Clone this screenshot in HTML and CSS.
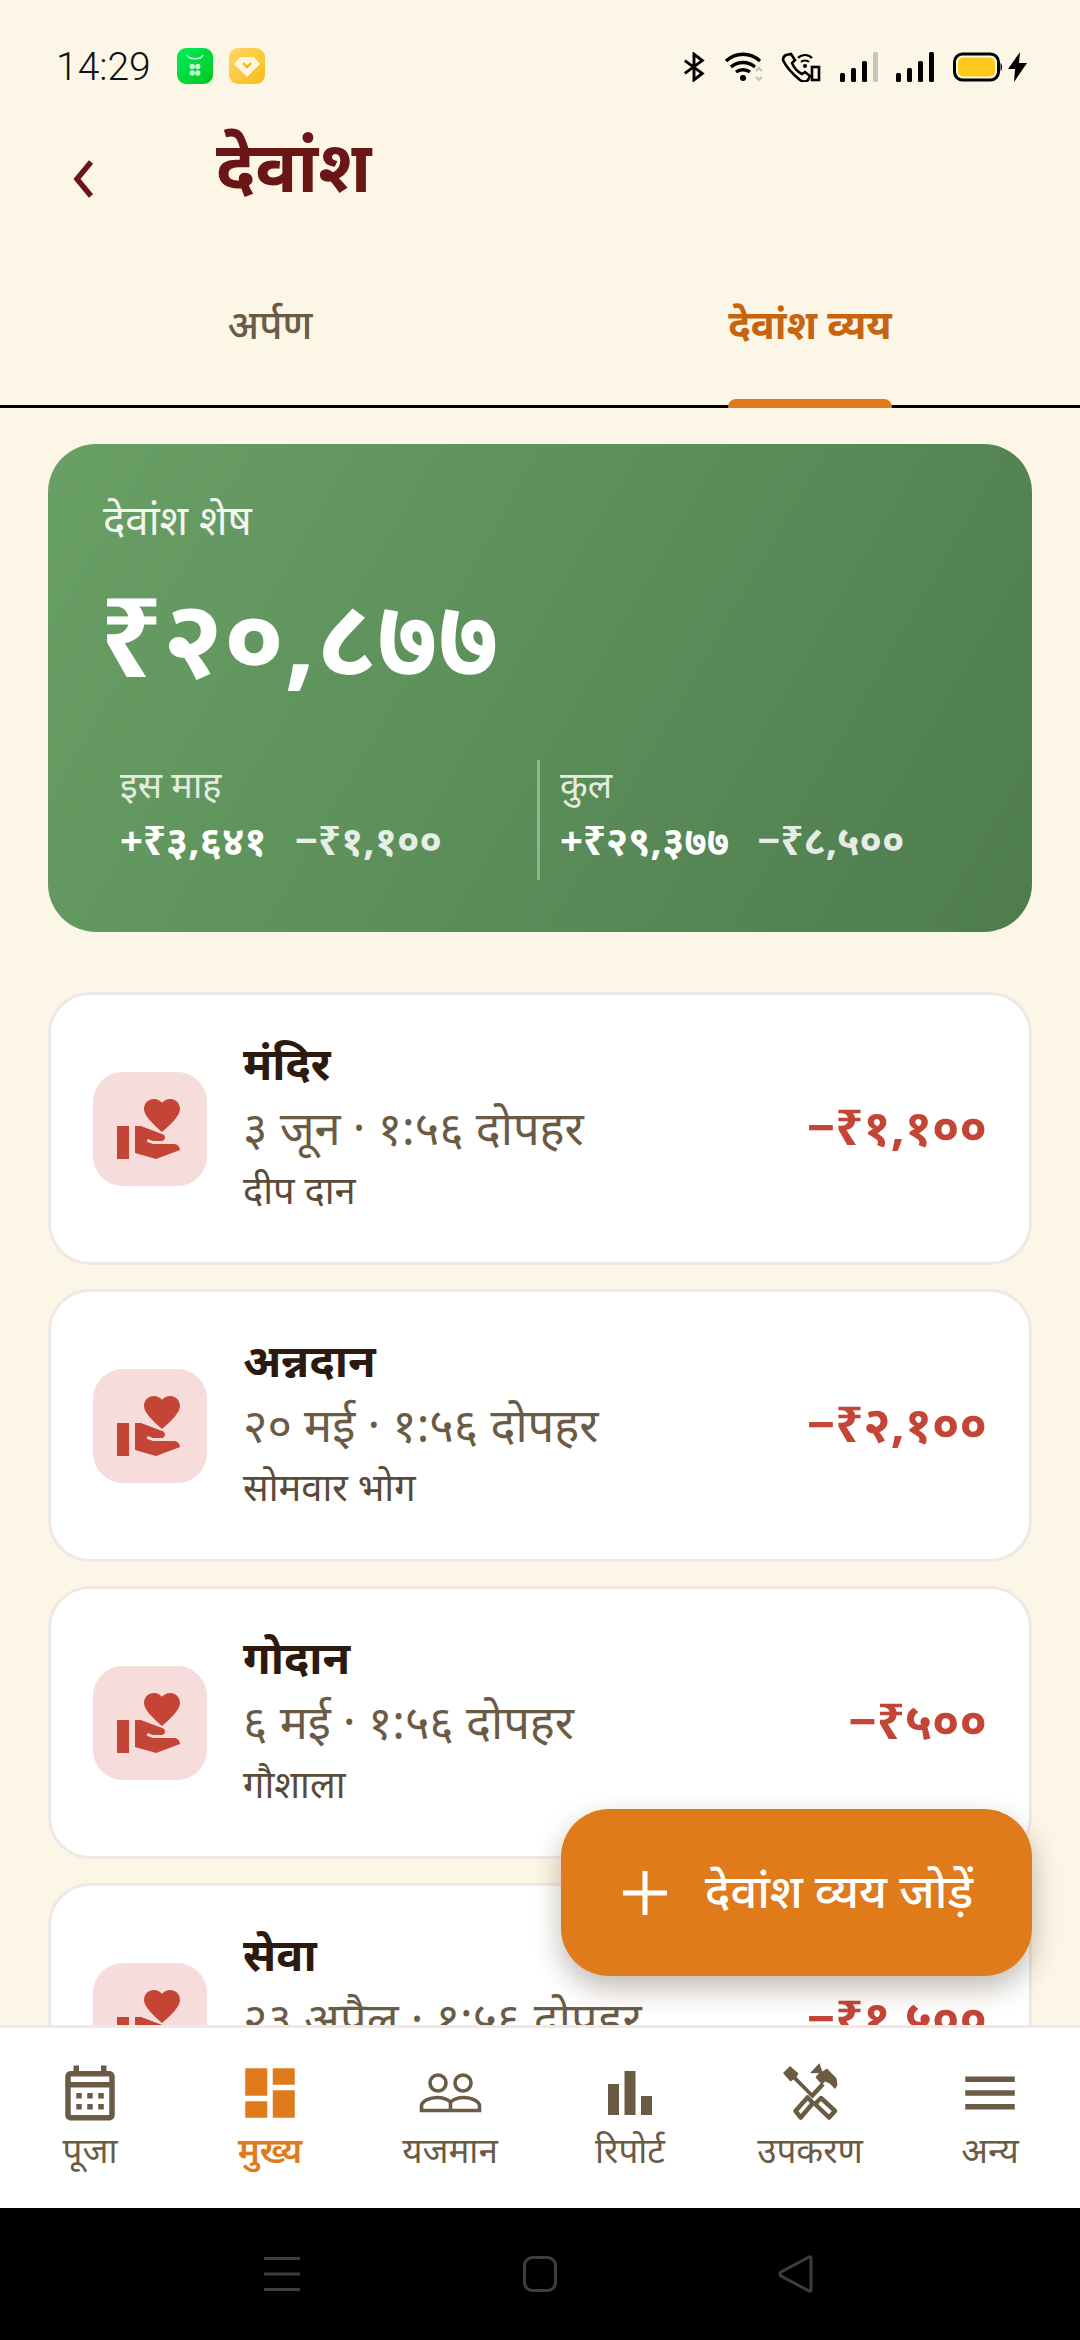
FILE: index.html
```html
<!DOCTYPE html>
<html lang="hi">
<head>
<meta charset="utf-8">
<title>देवांश</title>
<link rel="stylesheet" href="styles.css">
</head>
<body>
<div class="app">
  <div class="status">
    <span class="time">14:29</span>
    <svg class="notif notif-first" viewBox="0 0 36 36"><defs><linearGradient id="gg" x1="0" y1="0" x2="1" y2="1"><stop offset="0" stop-color="#00ee5c"/><stop offset="1" stop-color="#00c71f"/></linearGradient></defs><rect width="36" height="36" rx="9" fill="url(#gg)"/><path d="M10 7c2 5 14 5 16 0" fill="none" stroke="#d6ffe2" stroke-width="1.6"/><g fill="#c6f7d5"><ellipse cx="15.2" cy="18.5" rx="2.6" ry="2.8"/><ellipse cx="20.8" cy="18.5" rx="2.6" ry="2.8"/><ellipse cx="15.2" cy="25" rx="2.6" ry="2.8"/><ellipse cx="20.8" cy="25" rx="2.6" ry="2.8"/></g></svg>
    <svg class="notif" viewBox="0 0 36 36"><defs><linearGradient id="yg" x1="0" y1="0" x2="1" y2="1"><stop offset="0" stop-color="#ffd666"/><stop offset="1" stop-color="#f6bd1a"/></linearGradient></defs><rect width="36" height="36" rx="9" fill="url(#yg)"/><path d="M11 9h14l6 7-13 13L5 16z" fill="#fff6dc"/><path d="M14 15l4 4 4-4" fill="none" stroke="#f3b71c" stroke-width="2.4"/></svg>
    <div class="status-right">
      <svg class="s-bt" viewBox="0 0 24 30"><path d="M2 8l19 14-9 7V1l9 7L2 22" fill="none" stroke="#000" stroke-width="3.2"/></svg>
      <svg class="s-wifi" viewBox="0 0 40 30"><path d="M1 9c10-9 24-9 34 0M6 15c7-6 17-6 24 0M11 20c4-3 10-3 14 0" fill="none" stroke="#000" stroke-width="3.4"/><circle cx="18" cy="26" r="3" fill="#000"/><path d="M31 19l3-3 3 3M31 25l3 3 3-3" fill="none" stroke="#c9c3b8" stroke-width="2.2"/></svg>
      <svg class="s-call" viewBox="0 0 40 30"><path d="M5 3l5-1 4 6-3 3c2 5 6 9 10 11l3-2 5 4-2 4c-2 2-5 2-8 0C13 23 5 15 2 8c0-2 1-4 3-5z" fill="none" stroke="#000" stroke-width="2.6"/><path d="M17 6c4-4 10-4 14 0M20 10c2-2 6-2 8 0" fill="none" stroke="#000" stroke-width="2.2"/><circle cx="24" cy="14" r="2" fill="#000"/><rect x="31" y="15" width="7" height="13" fill="none" stroke="#000" stroke-width="2.6"/></svg>
      <svg class="s-sig" viewBox="0 0 40 30"><rect x="1" y="21" width="5" height="9" rx="1.5"/><rect x="12" y="16" width="5" height="14" rx="1.5"/><rect x="23" y="9" width="5" height="21" rx="1.5"/><rect x="34" y="0" width="5" height="30" rx="1.5" fill="#c9c3b8"/></svg>
      <svg class="s-sig s-sig2" viewBox="0 0 40 30"><rect x="1" y="21" width="5" height="9" rx="1.5"/><rect x="12" y="16" width="5" height="14" rx="1.5"/><rect x="23" y="9" width="5" height="21" rx="1.5"/><rect x="34" y="0" width="5" height="30" rx="1.5"/></svg>
      <svg class="s-bat" viewBox="0 0 50 30"><rect x="1.5" y="2" width="44" height="26" rx="8" fill="none" stroke="#000" stroke-width="3"/><rect x="5" y="5.5" width="37" height="19" rx="5" fill="#fdc91c"/><path d="M47.500 11c2 1 2 7 0 8z" fill="#000"/></svg>
      <svg class="s-bolt" viewBox="0 0 21 30"><path d="M13 0L1 17h7l-1 13L20 11h-8z" fill="#000"/></svg>
    </div>
  </div>

  <div class="header">
    <svg class="back" viewBox="0 0 24 40"><path d="M20 3L6 20l14 17" fill="none" stroke="#6b1616" stroke-width="5.500"/></svg>
    <h1 class="title">देवांश</h1>
  </div>

  <div class="tabs">
    <div class="tab"><span class="tab-label">अर्पण</span></div>
    <div class="tab tab-active"><span class="tab-label">देवांश व्यय<i class="tab-ind"></i></span></div>
  </div>

  <div class="scroll">
    <section class="hero">
      <div class="hero-label">देवांश शेष</div>
      <div class="hero-amount">₹२०,८७७</div>
      <div class="stats">
        <div class="stat stat-first">
          <div class="stat-label">इस माह</div>
          <div class="stat-value"><span>+₹३,६४१</span><span class="dim">−₹१,१००</span></div>
        </div>
        <div class="stat stat-second">
          <div class="stat-label">कुल</div>
          <div class="stat-value"><span>+₹२९,३७७</span><span class="dim">−₹८,५००</span></div>
        </div>
      </div>
    </section>

    <div class="list">
      <article class="card">
        <div class="card-icon"><svg viewBox="0 0 24 24"><path d="M1 11h4v11H1zm15-7.750C16.650 2.490 17.660 2 18.700 2 20.550 2 22 3.450 22 5.300c0 2.270-2.910 4.900-6 7.700-3.090-2.810-6-5.440-6-7.700C10 3.450 11.450 2 13.300 2c1.040 0 2.050.490 2.700 1.250zM20 17h-7l-2.090-.730.330-.940L13 16h2.820c.650 0 1.180-.530 1.180-1.180 0-.490-.310-.930-.770-1.110L8.970 11H7v9.020L14 22l8.010-3c-.010-1.100-.900-2-2.010-2z"/></svg></div>
        <div class="card-text"><div class="card-title">मंदिर</div><div class="card-date">३ जून · १:५६ दोपहर</div><div class="card-sub">दीप दान</div></div>
        <div class="card-amt">−₹१,१००</div>
      </article>
      <article class="card">
        <div class="card-icon"><svg viewBox="0 0 24 24"><path d="M1 11h4v11H1zm15-7.750C16.650 2.490 17.660 2 18.700 2 20.550 2 22 3.450 22 5.300c0 2.270-2.910 4.900-6 7.700-3.090-2.810-6-5.440-6-7.700C10 3.450 11.450 2 13.300 2c1.040 0 2.050.490 2.700 1.250zM20 17h-7l-2.090-.730.330-.940L13 16h2.820c.650 0 1.180-.530 1.180-1.180 0-.490-.310-.930-.770-1.110L8.970 11H7v9.020L14 22l8.010-3c-.010-1.100-.900-2-2.010-2z"/></svg></div>
        <div class="card-text"><div class="card-title">अन्नदान</div><div class="card-date">२० मई · १:५६ दोपहर</div><div class="card-sub">सोमवार भोग</div></div>
        <div class="card-amt">−₹२,१००</div>
      </article>
      <article class="card">
        <div class="card-icon"><svg viewBox="0 0 24 24"><path d="M1 11h4v11H1zm15-7.750C16.650 2.490 17.660 2 18.700 2 20.550 2 22 3.450 22 5.300c0 2.270-2.910 4.900-6 7.700-3.090-2.810-6-5.440-6-7.700C10 3.450 11.450 2 13.300 2c1.040 0 2.050.490 2.700 1.250zM20 17h-7l-2.090-.730.330-.940L13 16h2.820c.650 0 1.180-.530 1.180-1.180 0-.490-.310-.930-.770-1.110L8.970 11H7v9.020L14 22l8.010-3c-.010-1.100-.900-2-2.010-2z"/></svg></div>
        <div class="card-text"><div class="card-title">गोदान</div><div class="card-date">६ मई · १:५६ दोपहर</div><div class="card-sub">गौशाला</div></div>
        <div class="card-amt">−₹५००</div>
      </article>
      <article class="card">
        <div class="card-icon"><svg viewBox="0 0 24 24"><path d="M1 11h4v11H1zm15-7.750C16.650 2.490 17.660 2 18.700 2 20.550 2 22 3.450 22 5.300c0 2.270-2.910 4.900-6 7.700-3.090-2.810-6-5.440-6-7.700C10 3.450 11.450 2 13.300 2c1.040 0 2.050.490 2.700 1.250zM20 17h-7l-2.090-.730.330-.940L13 16h2.820c.650 0 1.180-.530 1.180-1.180 0-.490-.310-.930-.770-1.110L8.970 11H7v9.020L14 22l8.010-3c-.010-1.100-.900-2-2.010-2z"/></svg></div>
        <div class="card-text"><div class="card-title">सेवा</div><div class="card-date">२३ अप्रैल · १:५६ दोपहर</div><div class="card-sub">&nbsp;</div></div>
        <div class="card-amt">−₹१,५००</div>
      </article>
    </div>
  </div>

  <button class="fab">
    <svg class="fab-plus" viewBox="0 0 44 44"><path d="M22 0v44M0 22h44" stroke="#fff" stroke-width="5"/></svg>
    <span>देवांश व्यय जोड़ें</span>
  </button>

  <nav class="nav">
    <div class="nav-item">
      <svg viewBox="0 0 24 24"><path d="M19 4h-1V2h-2v2H8V2H6v2H5c-1.110 0-2 .900-2 2v14c0 1.100.890 2 2 2h14c1.100 0 2-.900 2-2V6c0-1.100-.900-2-2-2zm0 16H5V10h14v10zm0-12H5V6h14v2zM7 12h2v2H7zm4 0h2v2h-2zm4 0h2v2h-2zM7 16h2v2H7zm4 0h2v2h-2zm4 0h2v2h-2z"/></svg>
      <span>पूजा</span>
    </div>
    <div class="nav-item nav-active">
      <svg viewBox="0 0 24 24"><path d="M3 13h8V3H3v10zm0 8h8v-6H3v6zm10 0h8V11h-8v10zm0-18v6h8V3h-8z"/></svg>
      <span>मुख्य</span>
    </div>
    <div class="nav-item">
      <svg viewBox="0 0 66 66"><g fill="none" stroke="#6b5b45" stroke-width="3.600"><circle cx="21" cy="23" r="8"/><circle cx="46" cy="23" r="8"/><path d="M4.500 50.500V46C4.500 41 13 37.500 20 37.500 25 37.500 30 39 33.500 42 37 39 42 37.500 47 37.500 54 37.500 62.500 41 62.500 46V50.500zM33.500 42V50"/></g></svg>
      <span>यजमान</span>
    </div>
    <div class="nav-item">
      <svg viewBox="0 0 66 66"><rect x="11" y="24" width="11" height="31"/><rect x="27.500" y="11" width="11" height="44"/><rect x="44" y="36" width="11" height="19"/></svg>
      <span>रिपोर्ट</span>
    </div>
    <div class="nav-item">
      <svg viewBox="0 0 66 66"><path d="M13 6L6 13l7.500 8.500 3-2L33 36l2.500-2.500L19.500 17l2-3.500z"/><path d="M42.300 3.300L33 13.300 42 13 38.500 17.500 45 24.500 48 21.500 52.700 23.500 58 29 60.500 25 59.500 18.300 50 8.500 45.500 11.500z"/><path d="M34 37L46 24" fill="none" stroke="#6b5b45" stroke-width="4.500"/><g fill="none" stroke="#6b5b45" stroke-width="4.500" stroke-linejoin="round"><path d="M30.500 37.500L36 43 23.700 57.500 18.500 51z"/><path d="M44 38L58 51 52 57.500 38 44z"/></g></svg>
      <span>उपकरण</span>
    </div>
    <div class="nav-item">
      <svg viewBox="0 0 24 24"><path d="M3 18h18v-2H3v2zm0-5h18v-2H3v2zm0-7v2h18V6H3z"/></svg>
      <span>अन्य</span>
    </div>
  </nav>

  <div class="sysbar">
    <svg class="sys-menu" viewBox="0 0 36 34"><path d="M0 1.500h36M0 17h36M0 32.500h36" stroke="#3d3d3d" stroke-width="3"/></svg>
    <svg class="sys-home" viewBox="0 0 34 36"><rect x="1.500" y="1.500" width="31" height="33" rx="8" fill="none" stroke="#3d3d3d" stroke-width="3"/></svg>
    <svg class="sys-back" viewBox="0 0 36 38"><path d="M33 3c0-1-1-1.500-2-1L3 17c-1.500 1-1.500 3 0 4l28 15c1 .500 2 0 2-1z" fill="none" stroke="#3d3d3d" stroke-width="3"/></svg>
  </div>
</div>
</body>
</html>
```
FILE: styles.css
```css
* { box-sizing: border-box; }
html, body { margin: 0; padding: 0; }
body { font-family: "Noto Sans", Roboto, sans-serif; background: #fcf6e7; }
.app { position: relative; width: 1080px; height: 2340px; overflow: hidden; display: flex; flex-direction: column; background: #fcf6e7; }

.status { height: 100px; padding: 48px 52px 0 56px; display: flex; align-items: flex-start; flex: none; }
.time { font-family: Roboto, sans-serif; font-size: 39px; line-height: 38px; color: #111; width: 93px; font-weight: 300; }
.notif { width: 36px; height: 36px; margin-left: 16px; }
.notif-first { margin-left: 28px; }
.status-right { margin-left: auto; display: flex; align-items: flex-start; }
.status-right svg { height: 30px; display: block; margin-top: 4px; }
.s-bt { width: 22px; margin-right: 20px; }
.s-wifi { width: 40px; margin-right: 16px; }
.s-call { width: 40px; margin-right: 18px; }
.s-sig { width: 40px; fill: #000; margin-right: 16px; }
.s-sig2 { margin-right: 18px; }
.s-bat { width: 50px; margin-right: 4px; }
.s-bolt { width: 21px; }

.header { height: 120px; flex: none; display: flex; align-items: flex-start; padding-left: 71px; }
.back { width: 24px; height: 40px; margin-top: 59px; }
.title { margin: 20px 0 0 121px; font-size: 70px; line-height: 90px; font-weight: 700; color: #6b1616; }

.tabs { height: 188px; flex: none; display: flex; border-bottom: 3px solid #000; }
.tab { flex: 1; display: flex; justify-content: center; padding-top: 79px; font-size: 40px; line-height: 50px; font-weight: 500; color: #6b5b45; }
.tab-active { color: #c7640f; font-weight: 700; }
.tab-label { position: relative; height: 50px; }
.tab-ind { position: absolute; left: 0; right: 0; top: 100px; height: 9px; border-radius: 8px 8px 0 0; background: #e07b1c; }

.scroll { flex: 1; min-height: 0; overflow: hidden; padding: 36px 48px 0; }
.hero { height: 488px; border-radius: 48px; background: linear-gradient(120deg, #69a065, #4e7c4e); color: #fff; padding: 50px 52px 0 55px; margin-bottom: 60px; }
.hero-label { font-size: 42px; line-height: 50px; color: #f2f6ef; }
.hero-amount { font-size: 109px; line-height: 130px; font-weight: 700; margin: 26px 0 0 -3px; }
.stats { display: flex; margin-top: 60px; height: 120px; }
.stat { padding-top: 1px; }
.stat-first { width: 437px; padding-left: 17px; border-right: 3px solid rgba(255,255,255,.35); }
.stat-second { padding-left: 20px; }
.stat-label { font-size: 36px; line-height: 48px; color: #e4ece0; }
.stat-value { display: flex; gap: 28px; font-size: 40px; line-height: 46px; font-weight: 700; margin-top: 8px; }
.dim { opacity: .85; }

.list { display: flex; flex-direction: column; gap: 24px; }
.card { height: 273px; flex: none; background: #fff; border: 3px solid #f0e8e6; border-radius: 42px; display: flex; align-items: center; padding: 0 42px 0 42px; }
.card-icon { width: 114px; height: 114px; border-radius: 30px; background: #f6dcda; display: flex; align-items: center; justify-content: center; flex: none; margin-right: 36px; }
.card-icon svg { width: 72px; height: 72px; fill: #c44536; }
.card-text { padding-bottom: 8px; }
.card-title { font-size: 45px; line-height: 62px; font-weight: 700; color: #2c1a0e; }
.card-date { font-size: 47px; line-height: 66px; color: #6b5b45; }
.card-sub { font-size: 38px; line-height: 58px; color: #5a4a38; }
.card-amt { margin-left: auto; font-size: 49px; font-weight: 700; color: #c44536; line-height: 60px; margin-bottom: 6px; }

.fab { position: absolute; left: 561px; top: 1809px; width: 471px; height: 167px; border: 0; border-radius: 48px; background: #e07b1c; color: #fff; display: flex; align-items: center; padding: 0 0 6px 62px; font: inherit; font-size: 47px; font-weight: 500; box-shadow: 0 12px 28px rgba(60,40,20,.32); }
.fab-plus { width: 44px; height: 44px; margin: 6px 38px 0 0; flex: none; }

.nav { height: 183px; flex: none; background: #fff; border-top: 3px solid #efe8e6; display: grid; grid-template-columns: repeat(6, 180px); position: relative; }
.nav-item { display: flex; flex-direction: column; align-items: center; padding-top: 32px; color: #6b5b45; font-size: 35px; line-height: 48px; }
.nav-item svg { width: 66px; height: 66px; fill: #6b5b45; display: block; }
.nav-active { color: #e07b1c; font-weight: 600; }
.nav-active svg { fill: #e07b1c; }

.sysbar { height: 132px; flex: none; background: #000; display: flex; align-items: center; padding-left: 264px; }
.sys-menu { width: 36px; height: 34px; }
.sys-home { width: 34px; height: 36px; margin-left: 223px; }
.sys-back { width: 36px; height: 38px; margin-left: 221px; }
```
